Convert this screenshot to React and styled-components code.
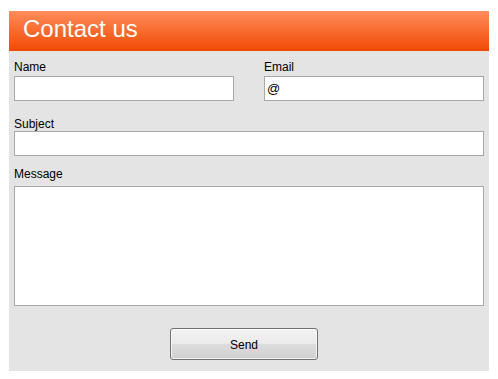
import React from "react"
import styled, { createGlobalStyle } from "styled-components"

const GlobalStyle = createGlobalStyle`
  body {
    margin: 0;
    background: #ffffff;
    font-family: "Liberation Sans", Arial, sans-serif;
  }
`

const Panel = styled.div`
  width: 480px;
  margin: 11px 0 0 9px;
  background: #e4e4e4;
  padding-bottom: 11px;
`

const Header = styled.h1`
  margin: 0;
  height: 40px;
  box-sizing: border-box;
  padding: 0 0 4px 14px;
  line-height: 36px;
  font-size: 24px;
  font-weight: normal;
  color: #ffffff;
  background: linear-gradient(to bottom, #fe8c5b 0%, #f86e33 45%, #f04a03 100%);
`

const Form = styled.form`
  display: flex;
  flex-direction: column;
  gap: 14px;
  padding: 9px 5px 0 5px;
`

const Row = styled.div`
  display: grid;
  grid-template-columns: 220px 220px;
  column-gap: 30px;
`

const Field = styled.div`
  display: flex;
  flex-direction: column;
`

// label spacing differs a little per field in the original form
const Label = styled.label`
  display: block;
  font-size: 12px;
  line-height: 14px;
  margin-top: ${(p) => p.$top || 0}px;
  margin-bottom: ${(p) => (p.$bottom === undefined ? 2 : p.$bottom)}px;
  color: #000000;
`

const Input = styled.input`
  box-sizing: border-box;
  width: 100%;
  height: 25px;
  margin: 0;
  padding: 1px 2px;
  border: 1px solid #a9a9a9;
  background: #ffffff;
  font-family: "Liberation Sans", Arial, sans-serif;
  font-size: 13px;
  color: #000000;
  outline: none;
`

const TextArea = styled.textarea`
  box-sizing: border-box;
  width: 100%;
  height: 120px;
  margin: 0;
  padding: 2px;
  border: 1px solid #a9a9a9;
  background: #ffffff;
  resize: none;
  font-family: "Liberation Sans", Arial, sans-serif;
  font-size: 13px;
  display: block;
`

const Actions = styled.div`
  display: flex;
  justify-content: center;
  padding: 8px 10px 0 0;
`

const Button = styled.button`
  width: 148px;
  height: 32px;
  border: 1px solid #707070;
  border-radius: 3px;
  background: linear-gradient(
    to bottom,
    #f2f2f2 0%,
    #ebebeb 48%,
    #dddddd 50%,
    #cfcfcf 100%
  );
  box-shadow: inset 0 0 0 1px rgba(255, 255, 255, 0.7);
  font-family: "Liberation Sans", Arial, sans-serif;
  font-size: 12px;
  line-height: 14px;
  padding: 2px 0 0 0;
  color: #000000;
`

const App = () => {
  return (
    <>
      <GlobalStyle />
      <Panel>
        <Header>Contact us</Header>
        <Form onSubmit={(e) => e.preventDefault()}>
          <Row>
            <Field>
              <Label htmlFor="name">Name</Label>
              <Input id="name" type="text" />
            </Field>
            <Field>
              <Label htmlFor="email">Email</Label>
              <Input id="email" type="text" defaultValue="@" />
            </Field>
          </Row>
          <Field>
            <Label htmlFor="subject" $top={2} $bottom={0}>
              Subject
            </Label>
            <Input id="subject" type="text" />
          </Field>
          <Field>
            <Label htmlFor="message" $top={-3} $bottom={5}>
              Message
            </Label>
            <TextArea id="message" />
          </Field>
          <Actions>
            <Button type="submit">Send</Button>
          </Actions>
        </Form>
      </Panel>
    </>
  )
}

export default App
